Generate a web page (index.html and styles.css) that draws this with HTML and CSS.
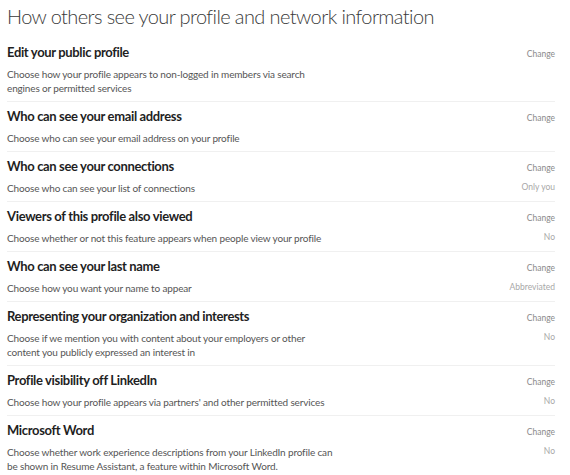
FILE: index.html
```html
<!DOCTYPE html>
<html lang="en">
<head>
    <meta charset="UTF-8">
    <title>Profile privacy</title>
    <link rel="stylesheet" href="styles.css">
</head>
<body>
    <h1>How others see your profile and network information</h1>

    <div class="setting">
        <div class="info">
            <h2>Edit your public profile</h2>
            <p>Choose how your profile appears to non-logged in members via search<br>engines or permitted services</p>
        </div>
        <div class="side">
            <span class="change">Change</span>
        </div>
    </div>

    <div class="setting">
        <div class="info">
            <h2>Who can see your email address</h2>
            <p>Choose who can see your email address on your profile</p>
        </div>
        <div class="side">
            <span class="change">Change</span>
        </div>
    </div>

    <div class="setting">
        <div class="info">
            <h2>Who can see your connections</h2>
            <p>Choose who can see your list of connections</p>
        </div>
        <div class="side">
            <span class="change">Change</span>
            <span class="value">Only you</span>
        </div>
    </div>

    <div class="setting">
        <div class="info">
            <h2>Viewers of this profile also viewed</h2>
            <p>Choose whether or not this feature appears when people view your profile</p>
        </div>
        <div class="side">
            <span class="change">Change</span>
            <span class="value">No</span>
        </div>
    </div>

    <div class="setting">
        <div class="info">
            <h2>Who can see your last name</h2>
            <p>Choose how you want your name to appear</p>
        </div>
        <div class="side">
            <span class="change">Change</span>
            <span class="value">Abbreviated</span>
        </div>
    </div>

    <div class="setting">
        <div class="info">
            <h2>Representing your organization and interests</h2>
            <p>Choose if we mention you with content about your employers or other<br>content you publicly expressed an interest in</p>
        </div>
        <div class="side">
            <span class="change">Change</span>
            <span class="value">No</span>
        </div>
    </div>

    <div class="setting">
        <div class="info">
            <h2>Profile visibility off LinkedIn</h2>
            <p>Choose how your profile appears via partners' and other permitted services</p>
        </div>
        <div class="side">
            <span class="change">Change</span>
            <span class="value">No</span>
        </div>
    </div>

    <div class="setting">
        <div class="info">
            <h2>Microsoft Word</h2>
            <p>Choose whether work experience descriptions from your LinkedIn profile can<br>be shown in Resume Assistant, a feature within Microsoft Word.</p>
        </div>
        <div class="side">
            <span class="change">Change</span>
            <span class="value">No</span>
        </div>
    </div>
</body>
</html>
```

FILE: styles.css
```css
/* Page */
body {
    margin: 0;
    padding: 0 15px 0 7px;
    background: #fff;
    font-family: 'Lato', 'Open Sans', sans-serif;
    color: #222;
}

h1 {
    margin: 0;
    padding: 2px 0 8px;
    font-size: 20px;
    line-height: 28px;
    font-weight: 300;
    letter-spacing: -0.6px;
    white-space: nowrap;
    color: #3a3a3a;
}

/* One row per setting */
.setting {
    display: flex;
    justify-content: space-between;
    padding: 4px 0 6px;
    border-bottom: 1px solid #f0f0f0;
}
.setting:last-child {
    border-bottom: none;
}

h2 {
    margin: 0 0 5px;
    font-size: 13px;
    line-height: 20px;
    font-weight: 700;
    letter-spacing: -0.35px;
    color: #1f1f1f;
}

p {
    margin: 0;
    font-size: 10px;
    line-height: 14px;
    letter-spacing: -0.15px;
    color: #555;
}

.side {
    display: flex;
    flex-direction: column;
    align-items: flex-end;
    padding-top: 5px;
}
.change {
    font-size: 8.5px;
    line-height: 14px;
    color: #8a8a8a;
}
.value {
    margin-top: 5px;
    font-size: 8.5px;
    line-height: 14px;
    color: #a8a8a8;
}
```
